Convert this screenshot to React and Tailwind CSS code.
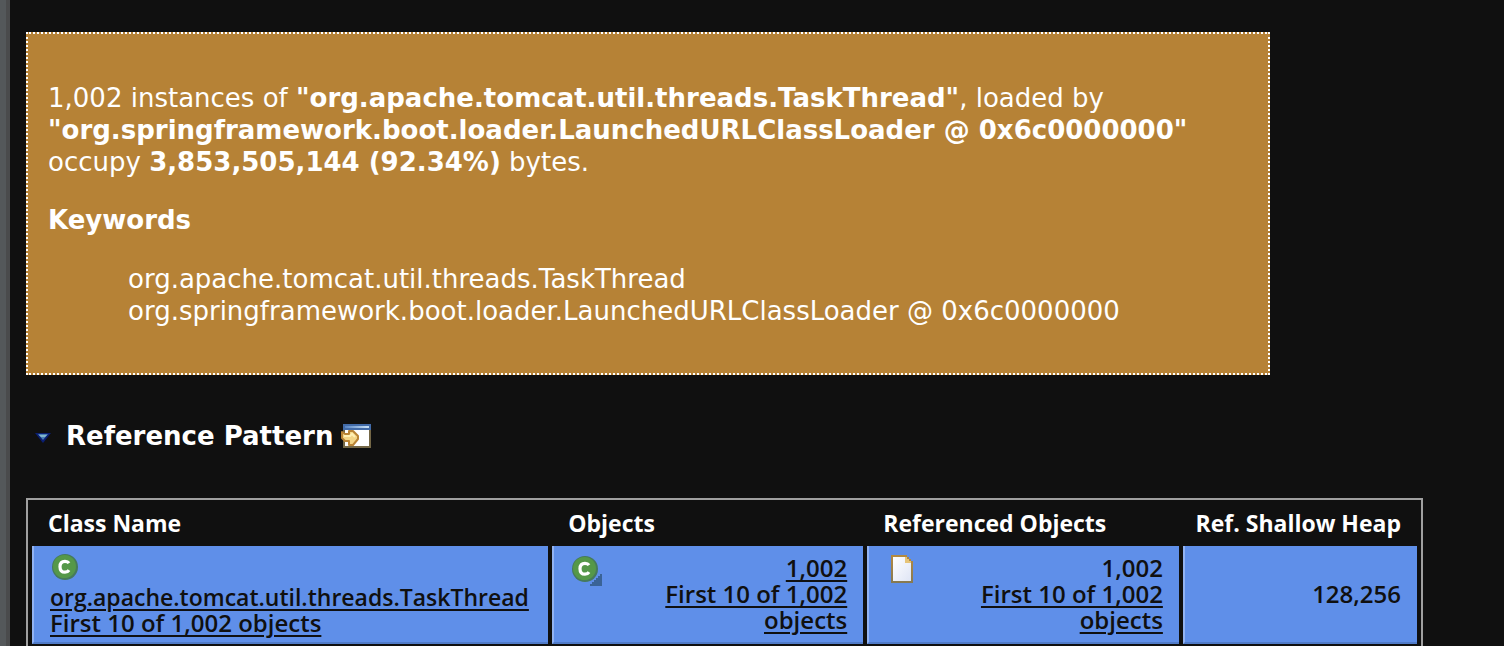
import React from 'react';

function ClassIcon({ className }) {
  return (
    <svg viewBox="0 0 26 26" className={className} aria-hidden="true">
      <circle cx="13" cy="13" r="13" fill="#467a5c" />
      <circle cx="12.5" cy="12.5" r="11.5" fill="#559849" />
      <path d="M17 9.200C16.200 8 14.800 7.300 13 7.300C9.800 7.300 8 9.400 8 12.700C8 16 9.800 18.200 13 18.200C14.800 18.200 16.200 17.500 17 16.200" fill="none" stroke="#fff" strokeWidth="3.200" />
    </svg>
  );
}

function InstancesIcon() {
  return (
    <svg viewBox="0 0 30 31" className="block h-[31px] w-[30px]" aria-hidden="true">
      <circle cx="13" cy="14" r="13" fill="#467a5c" />
      <circle cx="12.500" cy="13.500" r="11.500" fill="#559849" />
      <path d="M17 10.200C16.200 9 14.800 8.300 13 8.300C9.800 8.300 8 10.400 8 13.700C8 17 9.800 19.200 13 19.200C14.800 19.200 16.200 18.500 17 17.200" fill="none" stroke="#fff" strokeWidth="3.200" />
      <path d="M30 19V31H18V29H20V27H22V25H24V23H26V21H28V19Z" fill="#3a6396" />
    </svg>
  );
}

function FileIcon() {
  return (
    <svg viewBox="0 0 22 28" className="block h-7 w-[22px]" aria-hidden="true">
      <defs>
        <linearGradient id="file-edge" x1="0" y1="0" x2="0" y2="1">
          <stop offset="0" stopColor="#b58a40" />
          <stop offset="1" stopColor="#857952" />
        </linearGradient>
        <linearGradient id="file-page" x1="0" y1="0" x2="1" y2="1">
          <stop offset="0" stopColor="#fff" />
          <stop offset="1" stopColor="#dfe5f5" />
        </linearGradient>
      </defs>
      <path d="M0 0H16V2H18V4H20V6H22V28H0Z" fill="url(#file-edge)" />
      <path d="M2 2H14V8H20V26H2Z" fill="url(#file-page)" />
      <path d="M14 2H16V4H18V6H20V8H14Z" fill="#e6c478" />
    </svg>
  );
}

function OpenIcon() {
  return (
    <svg viewBox="0 0 30 24" className="block h-6 w-[30px]" aria-hidden="true">
      <defs>
        <linearGradient id="title-bar" x1="0" y1="0" x2="1" y2="0">
          <stop offset="0" stopColor="#5684c4" />
          <stop offset="0.900" stopColor="#c2dcf4" />
        </linearGradient>
      </defs>
      <path d="M2 0H30V24H2Z" fill="#746746" />
      <path d="M2 0H30V6H2Z" fill="#426ba8" />
      <path d="M4 2H28V4H4Z" fill="url(#title-bar)" />
      <path d="M4 6H28V22H4Z" fill="#fff" />
      <path d="M1 8L4 10H8V7H12L17 12V15L12 21H8V17H4L1 14Z" fill="#f3d587" stroke="#b98436" strokeWidth="2" strokeLinejoin="round" />
      <path d="M3 12H9L11 10L14 13" fill="none" stroke="#fff0b5" strokeWidth="2" />
      <path d="M4 18H6V20H4Z" fill="#fff" />
    </svg>
  );
}

function Twisty() {
  return (
    <svg viewBox="0 0 18 14" className="block h-[14px] w-[18px]" aria-hidden="true">
      <path d="M1 4H17L9 14Z" fill="#0b1f72" />
      <path d="M4 5H14L9 11Z" fill="#477eb5" />
      <path d="M5 6H13L11 8H7Z" fill="#82b6cd" />
    </svg>
  );
}

const linkStyle = 'underline decoration-2 underline-offset-[3px]';
const cellStyle = 'border-b-2 border-l-2 border-b-[#507bc8] border-l-[#92b3f2] bg-[#5f8fe9] px-4';

function Link({ children }) {
  return (
    <a href="#objects" className={linkStyle}>
      {children}
    </a>
  );
}

export default function App() {
  return (
    <div className="flex h-screen overflow-hidden bg-[#101010] font-['DejaVu_Sans',sans-serif] text-white">
      <div className="w-[10px] shrink-0 border-r-4 border-[#4a4b4c] bg-[#54585a]" />
      <main className="min-w-0 flex-1 pt-8 pr-20 pl-4">
        <section className="max-w-[1244px] border-2 border-dotted border-white bg-[#b68236] px-5 pt-12 pb-[46px] text-[26px] leading-8">
          <p>
            1,002 instances of <strong>"org.apache.tomcat.util.threads.TaskThread"</strong>, loaded by{' '}
            <strong>"org.springframework.boot.loader.LaunchedURLClassLoader @ 0x6c0000000"</strong>{' '}
            occupy <strong>3,853,505,144 (92.34%)</strong> bytes.
          </p>
          <h3 className="mt-[26px] font-bold">Keywords</h3>
          <ul className="mt-[27px] pl-20">
            <li>org.apache.tomcat.util.threads.TaskThread</li>
            <li>org.springframework.boot.loader.LaunchedURLClassLoader @ 0x6c0000000</li>
          </ul>
        </section>

        <h2 className="mt-[45px] flex items-center pl-2 text-[26px] leading-8 font-bold">
          <button type="button" className="mr-[14px]" aria-label="Toggle section">
            <Twisty />
          </button>
          Reference Pattern
          <a href="#pattern" className="ml-2" aria-label="Open reference pattern">
            <OpenIcon />
          </a>
        </h2>

        <table className="mt-[46px] w-full max-w-[1397px] table-fixed border-separate border-spacing-1 border-2 border-[#a0a0a0] font-['Open_Sans','Noto_Sans',sans-serif] text-[23px] leading-[26px]">
          <colgroup>
            <col className="w-[37.600%]" />
            <col className="w-[22.650%]" />
            <col className="w-[22.700%]" />
            <col />
          </colgroup>
          <thead>
            <tr className="h-[38px] text-left font-bold">
              <th className="px-4">Class Name</th>
              <th className="px-4">Objects</th>
              <th className="px-4">Referenced Objects</th>
              <th className="pr-4 text-right whitespace-nowrap">Ref. Shallow Heap</th>
            </tr>
          </thead>
          <tbody className="text-[24px] leading-[26px] font-semibold text-[#101010]">
            <tr className="h-[98px]">
              <td className={cellStyle}>
                <ClassIcon className="mt-[2px] mb-1 ml-[2px] block size-[26px]" />
                <span className="text-[23px]">
                  <Link>org.apache.tomcat.util.threads.TaskThread</Link>
                </span>
                <br />
                <Link>First 10 of 1,002 objects</Link>
              </td>
              <td className={cellStyle}>
                <div className="flex items-start justify-between pl-[2px]">
                  <InstancesIcon />
                  <div className="w-[200px] text-right">
                    <Link>1,002</Link>
                    <br />
                    <Link>First 10 of 1,002 objects</Link>
                  </div>
                </div>
              </td>
              <td className={cellStyle}>
                <div className="flex items-start justify-between pl-[6px]">
                  <FileIcon />
                  <div className="w-[200px] text-right">
                    1,002
                    <br />
                    <Link>First 10 of 1,002 objects</Link>
                  </div>
                </div>
              </td>
              <td className={cellStyle + ' text-right'}>128,256</td>
            </tr>
          </tbody>
        </table>
      </main>
    </div>
  );
}
